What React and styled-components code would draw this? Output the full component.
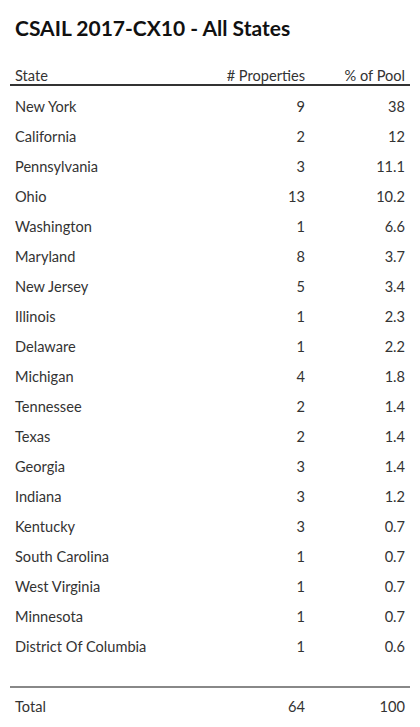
import React from "react";
import styled, { createGlobalStyle } from "styled-components";

const Global = createGlobalStyle`
  html, body { margin: 0; padding: 0; background: #fff; }
  body { font-family: Lato, "Open Sans", sans-serif; color: #333; }
`;

const Page = styled.div`
  padding: 0 10px;
  width: 400px;
`;

const Title = styled.h1`
  margin: 0;
  padding: 16px 0 0 5px;
  font-size: 21px;
  line-height: 24px;
  font-weight: 700;
  color: #111;
`;

const Table = styled.div`
  margin-top: 26px;
`;

const Row = styled.div`
  display: grid;
  grid-template-columns: 1fr 100px 100px;
  align-items: center;
  height: ${(p) => p.$h || 30}px;
  padding: 0 5px;
  font-size: 14.6px;
  color: #333;
  border-bottom: ${(p) => (p.$head ? "2px solid #333" : "none")};
  border-top: ${(p) => (p.$total ? "2px solid #888" : "none")};
  box-sizing: border-box;
`;

const Cell = styled.div`
  text-align: ${(p) => (p.$right ? "right" : "left")};
  white-space: nowrap;
`;

const Body = styled.div`
  padding-top: 5px;
`;

const Spacer = styled.div`
  height: 25px;
`;

const data = [
  ["New York", 9, "38"],
  ["California", 2, "12"],
  ["Pennsylvania", 3, "11.1"],
  ["Ohio", 13, "10.2"],
  ["Washington", 1, "6.6"],
  ["Maryland", 8, "3.7"],
  ["New Jersey", 5, "3.4"],
  ["Illinois", 1, "2.3"],
  ["Delaware", 1, "2.2"],
  ["Michigan", 4, "1.8"],
  ["Tennessee", 2, "1.4"],
  ["Texas", 2, "1.4"],
  ["Georgia", 3, "1.4"],
  ["Indiana", 3, "1.2"],
  ["Kentucky", 3, "0.7"],
  ["South Carolina", 1, "0.7"],
  ["West Virginia", 1, "0.7"],
  ["Minnesota", 1, "0.7"],
  ["District Of Columbia", 1, "0.6"],
];

export default function App() {
  return (
    <Page>
      <Global />
      <Title>CSAIL 2017-CX10 - All States</Title>
      <Table>
        <Row $head $h={20}>
          <Cell>State</Cell>
          <Cell $right># Properties</Cell>
          <Cell $right>% of Pool</Cell>
        </Row>
        <Body>
          {data.map(([s, n, p]) => (
            <Row key={s}>
              <Cell>{s}</Cell>
              <Cell $right>{n}</Cell>
              <Cell $right>{p}</Cell>
            </Row>
          ))}
        </Body>
        <Spacer />
        <Row $total $h={38}>
          <Cell>Total</Cell>
          <Cell $right>64</Cell>
          <Cell $right>100</Cell>
        </Row>
      </Table>
    </Page>
  );
}
